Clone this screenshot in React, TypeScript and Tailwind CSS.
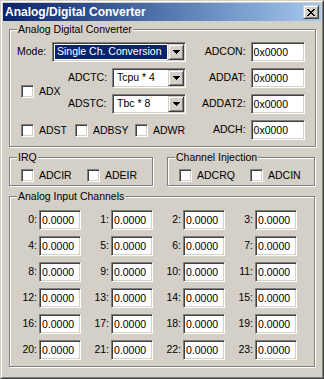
import React from "react";

const sunken =
  "border border-t-[#808080] border-l-[#808080] border-r-white border-b-white shadow-[inset_1px_1px_0_#404040,inset_-1px_-1px_0_#d4d0c8] bg-white";
const raised =
  "border border-t-[#d4d0c8] border-l-[#d4d0c8] border-r-[#404040] border-b-[#404040] shadow-[inset_1px_1px_0_#fff,inset_-1px_-1px_0_#808080] bg-[#d4d0c8]";
const etched = "border border-[#808080] shadow-[inset_1px_1px_0_#fff,1px_1px_0_#fff]";

const Check = ({ label, w }: { label: string; w?: string }) => (
  <label className={`flex items-center h-[13px] ${w ?? ""}`}>
    <span className={`${sunken} w-[13px] h-[13px] shrink-0`} />
    <span className="ml-[5px] leading-[13px]">{label}</span>
  </label>
);

const Field = ({ value, w }: { value: string; w: string }) => (
  <div className={`${sunken} ${w} h-[20px] flex items-center pl-[2px] leading-none`}>{value}</div>
);

const Arrow = () => (
  <svg width="7" height="4" viewBox="0 0 7 4" shapeRendering="crispEdges">
    <rect x="0" y="0" width="7" height="1" fill="#000" />
    <rect x="1" y="1" width="5" height="1" fill="#000" />
    <rect x="2" y="2" width="3" height="1" fill="#000" />
    <rect x="3" y="3" width="1" height="1" fill="#000" />
  </svg>
);

const Select = ({ value, w, active }: { value: string; w: string; active?: boolean }) => (
  <div className={`${sunken} ${w} h-[20px] flex p-px`}>
    <div className="flex-1 flex p-px min-w-0">
      <span
        className={`flex-1 flex items-center pl-[2px] whitespace-nowrap overflow-hidden ${
          active ? "bg-[#0a246a] text-white" : ""
        }`}
      >
        {value}
      </span>
    </div>
    <div className={`${raised} w-[16px] h-[16px] flex items-center justify-center shrink-0`}>
      <Arrow />
    </div>
  </div>
);

const Group = ({ title, className, children }: { title: string; className?: string; children: React.ReactNode }) => (
  <fieldset className={`${etched} ${className ?? ""}`}>
    <legend className="ml-[7px] px-px leading-[13px] bg-[#d4d0c8]">{title}</legend>
    {children}
  </fieldset>
);

const regs = [
  ["ADCON:", "0x0000"],
  ["ADDAT:", "0x0000"],
  ["ADDAT2:", "0x0000"],
  ["ADCH:", "0x0000"],
];

export default function App() {
  return (
    <div className="w-[324px] h-[379px] bg-[#d4d0c8] border border-t-[#d4d0c8] border-l-[#d4d0c8] border-r-[#404040] border-b-[#404040] font-['Liberation_Sans',Arial,sans-serif] text-[10.5px] text-black">
      <div className="h-full border border-t-white border-l-white border-r-[#808080] border-b-[#808080] p-px flex flex-col">
        {/* title bar */}
        <div className="h-[18px] flex items-center justify-between bg-gradient-to-r from-[#0a246a] to-[#a6caf0] pl-[2px] pr-[2px]">
          <span className="text-white font-bold text-[12px] leading-none">Analog/Digital Converter</span>
          <div className={`${raised} w-[16px] h-[14px] flex items-center justify-center`}>
            <svg width="8" height="7" viewBox="0 0 8 7" shapeRendering="crispEdges">
              <path d="M0 0h2v1H0zM6 0h2v1H6zM1 1h2v1H1zM5 1h2v1H5zM2 2h4v1H2zM3 3h2v1H3zM2 4h4v1H2zM1 5h2v1H1zM5 5h2v1H5zM0 6h2v1H0zM6 6h2v1H6z" fill="#000" />
            </svg>
          </div>
        </div>

        <div className="px-[6px] pt-[2px] flex flex-col">
          {/* ADC */}
          <Group title="Analog Digital Converter" className="pt-[6px] pb-[6px]">
            <div className="flex">
              <div className="flex flex-col gap-[6px] w-[192px]">
                <div className="flex items-center h-[20px] pl-[7px]">
                  <span className="w-[35px]">Mode:</span>
                  <Select value="Single Ch. Conversion" w="w-[134px]" active />
                </div>
                <div className="flex">
                  <div className="w-[58px] pl-[11px] flex items-center">
                    <Check label="ADX" />
                  </div>
                  <div className="flex flex-col gap-[6px]">
                    <div className="flex items-center h-[20px]">
                      <span className="w-[44px]">ADCTC:</span>
                      <Select value="Tcpu * 4" w="w-[74px]" />
                    </div>
                    <div className="flex items-center h-[20px]">
                      <span className="w-[44px]">ADSTC:</span>
                      <Select value="Tbc * 8" w="w-[74px]" />
                    </div>
                  </div>
                </div>
                <div className="flex items-center h-[20px] pl-[11px]">
                  <Check label="ADST" w="w-[54px]" />
                  <Check label="ADBSY" w="w-[60px]" />
                  <Check label="ADWR" />
                </div>
              </div>
              <div className="flex flex-col gap-[6px] flex-1 pr-[10px]">
                {regs.map(([l, v]) => (
                  <div key={l} className="flex items-center justify-end h-[20px]">
                    <span className="mr-[5px]">{l}</span>
                    <Field value={v} w="w-[54px]" />
                  </div>
                ))}
              </div>
            </div>
          </Group>

          <div className="flex justify-between mt-[4px]">
            <Group title="IRQ" className="w-[144px] pt-[5px] pb-[3px]">
              <div className="flex pl-[11px]">
                <Check label="ADCIR" w="w-[66px]" />
                <Check label="ADEIR" />
              </div>
            </Group>
            <Group title="Channel Injection" className="w-[148px] pt-[5px] pb-[3px]">
              <div className="flex pl-[11px]">
                <Check label="ADCRQ" w="w-[71px]" />
                <Check label="ADCIN" />
              </div>
            </Group>
          </div>

          <Group title="Analog Input Channels" className="mt-[4px] pt-[7px] pb-[6px]">
            <div className="grid grid-cols-[repeat(4,72px)] gap-y-[6px] pl-[2px]">
              {Array.from({ length: 24 }, (_, i) => (
                <div key={i} className="flex items-center h-[20px]">
                  <span className="w-[27px] text-right pr-[2px]">{i}:</span>
                  <Field value="0.0000" w="w-[42px]" />
                </div>
              ))}
            </div>
          </Group>
        </div>
      </div>
    </div>
  );
}
